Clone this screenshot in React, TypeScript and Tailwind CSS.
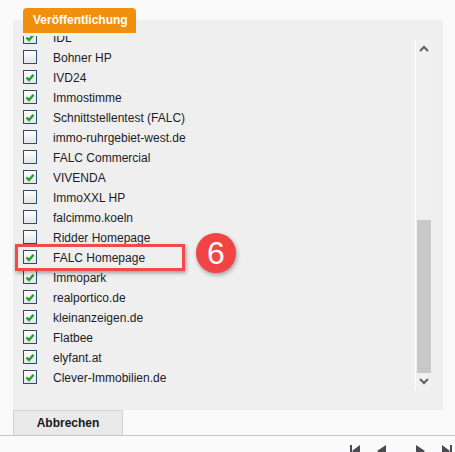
import React from "react";

type Portal = { name: string; checked: boolean };

const portals: Portal[] = [
  { name: "IDL", checked: true },
  { name: "Bohner HP", checked: false },
  { name: "IVD24", checked: true },
  { name: "Immostimme", checked: true },
  { name: "Schnittstellentest (FALC)", checked: true },
  { name: "immo-ruhrgebiet-west.de", checked: false },
  { name: "FALC Commercial", checked: false },
  { name: "VIVENDA", checked: true },
  { name: "ImmoXXL HP", checked: false },
  { name: "falcimmo.koeln", checked: false },
  { name: "Ridder Homepage", checked: false },
  { name: "FALC Homepage", checked: true },
  { name: "Immopark", checked: true },
  { name: "realportico.de", checked: true },
  { name: "kleinanzeigen.de", checked: true },
  { name: "Flatbee", checked: true },
  { name: "elyfant.at", checked: true },
  { name: "Clever-Immobilien.de", checked: true },
];

function Checkbox({ checked }: { checked: boolean }) {
  return (
    <span className="w-[14px] h-[14px] border border-[#2b4f77] bg-gradient-to-b from-[#ffffff] to-[#e4e4e4] flex items-center justify-center shrink-0">
      {checked && (
        <svg width="10" height="9" viewBox="0 0 10 9">
          <path d="M1.5 4.5 L4 7 L8.5 1.8" fill="none" stroke="#1fa030" strokeWidth="2.4" />
        </svg>
      )}
    </span>
  );
}

function NavArrow({ dir, edge }: { dir: "left" | "right"; edge?: boolean }) {
  return (
    <svg width="11" height="12" viewBox="0 0 11 12">
      {dir === "left" ? (
        <>
          {edge && <rect x="0" y="0" width="2" height="12" fill="#4a4a50" />}
          <path d={edge ? "M10 0 L10 12 L2 6 Z" : "M10 0 L10 12 L1 6 Z"} fill="#4a4a50" />
        </>
      ) : (
        <>
          <path d={edge ? "M1 0 L1 12 L9 6 Z" : "M1 0 L1 12 L10 6 Z"} fill="#4a4a50" />
          {edge && <rect x="9" y="0" width="2" height="12" fill="#4a4a50" />}
        </>
      )}
    </svg>
  );
}

export default function App() {
  return (
    <div
      className="relative w-[455px] h-[452px] overflow-hidden bg-[#fafafa] text-[12px] text-[#1c1c28]"
      style={{ fontFamily: '"Liberation Sans", Arial, sans-serif' }}
    >
      <div className="pt-[20px] px-[13px]">
        {/* Panel */}
        <div className="relative w-[430px] h-[390px] bg-[#efefef] pt-[16px]">
          <div className="absolute left-[10px] top-[-12px] w-[113px] h-[25px] rounded-t-[4px] bg-[#f0900c] text-white font-bold text-[12px] leading-[25px] pl-[10px] z-10">
            Veröffentlichung
          </div>

          <div className="flex h-[358px]">
            {/* list */}
            <div className="flex-1 overflow-hidden">
              <div className="mt-[-9px] pl-[10px]">
                {portals.map((p) => (
                  <div key={p.name} className="h-[20px] flex items-center">
                    <Checkbox checked={p.checked} />
                    <span className="ml-[16px] leading-[20px] pt-[2px]">{p.name}</span>
                  </div>
                ))}
              </div>
            </div>

            {/* scrollbar */}
            <div className="mt-[4px] mr-[11px] w-[17px] h-[350px] border-l border-white bg-[#f0f0f0] flex flex-col">
              <div className="h-[17px] flex items-center justify-center">
                <svg width="10" height="7" viewBox="0 0 10 7">
                  <path d="M1 6 L5 2 L9 6" fill="none" stroke="#606060" strokeWidth="2" />
                </svg>
              </div>
              <div className="h-[163px]" />
              <div className="h-[153px] mx-[1px] bg-[#c8c8c8]" />
              <div className="h-[17px] flex items-center justify-center">
                <svg width="10" height="7" viewBox="0 0 10 7">
                  <path d="M1 1 L5 5 L9 1" fill="none" stroke="#606060" strokeWidth="2" />
                </svg>
              </div>
            </div>
          </div>
        </div>

        {/* Buttons */}
        <div className="flex">
          <button className="w-[110px] h-[25px] bg-[#e9e9e9] border border-b-0 border-[#d2d2d2] font-bold text-[12px] text-[#1a1a1a]">
            Abbrechen
          </button>
        </div>
      </div>

      <div className="h-px bg-[#c8c8c8]" />

      {/* Pager */}
      <div className="flex justify-end items-start pt-[9px] pr-[3px]">
        <NavArrow dir="left" edge />
        <div className="ml-[15px]">
          <NavArrow dir="left" />
        </div>
        <div className="ml-[28px]">
          <NavArrow dir="right" />
        </div>
        <div className="ml-[15px]">
          <NavArrow dir="right" edge />
        </div>
      </div>

      {/* Annotation overlay */}
      <div className="absolute left-[15px] top-[244px] w-[170px] h-[27px] border-[3px] border-[#f04a4a] shadow-[1px_2px_4px_rgba(0,0,0,0.35)]" />
      <div className="absolute left-[196px] top-[233px] w-[40px] h-[40px] rounded-full bg-[#f24444] text-white text-[32px] leading-none flex items-center justify-center shadow-[1px_2px_4px_rgba(0,0,0,0.35)]">
        6
      </div>
    </div>
  );
}
